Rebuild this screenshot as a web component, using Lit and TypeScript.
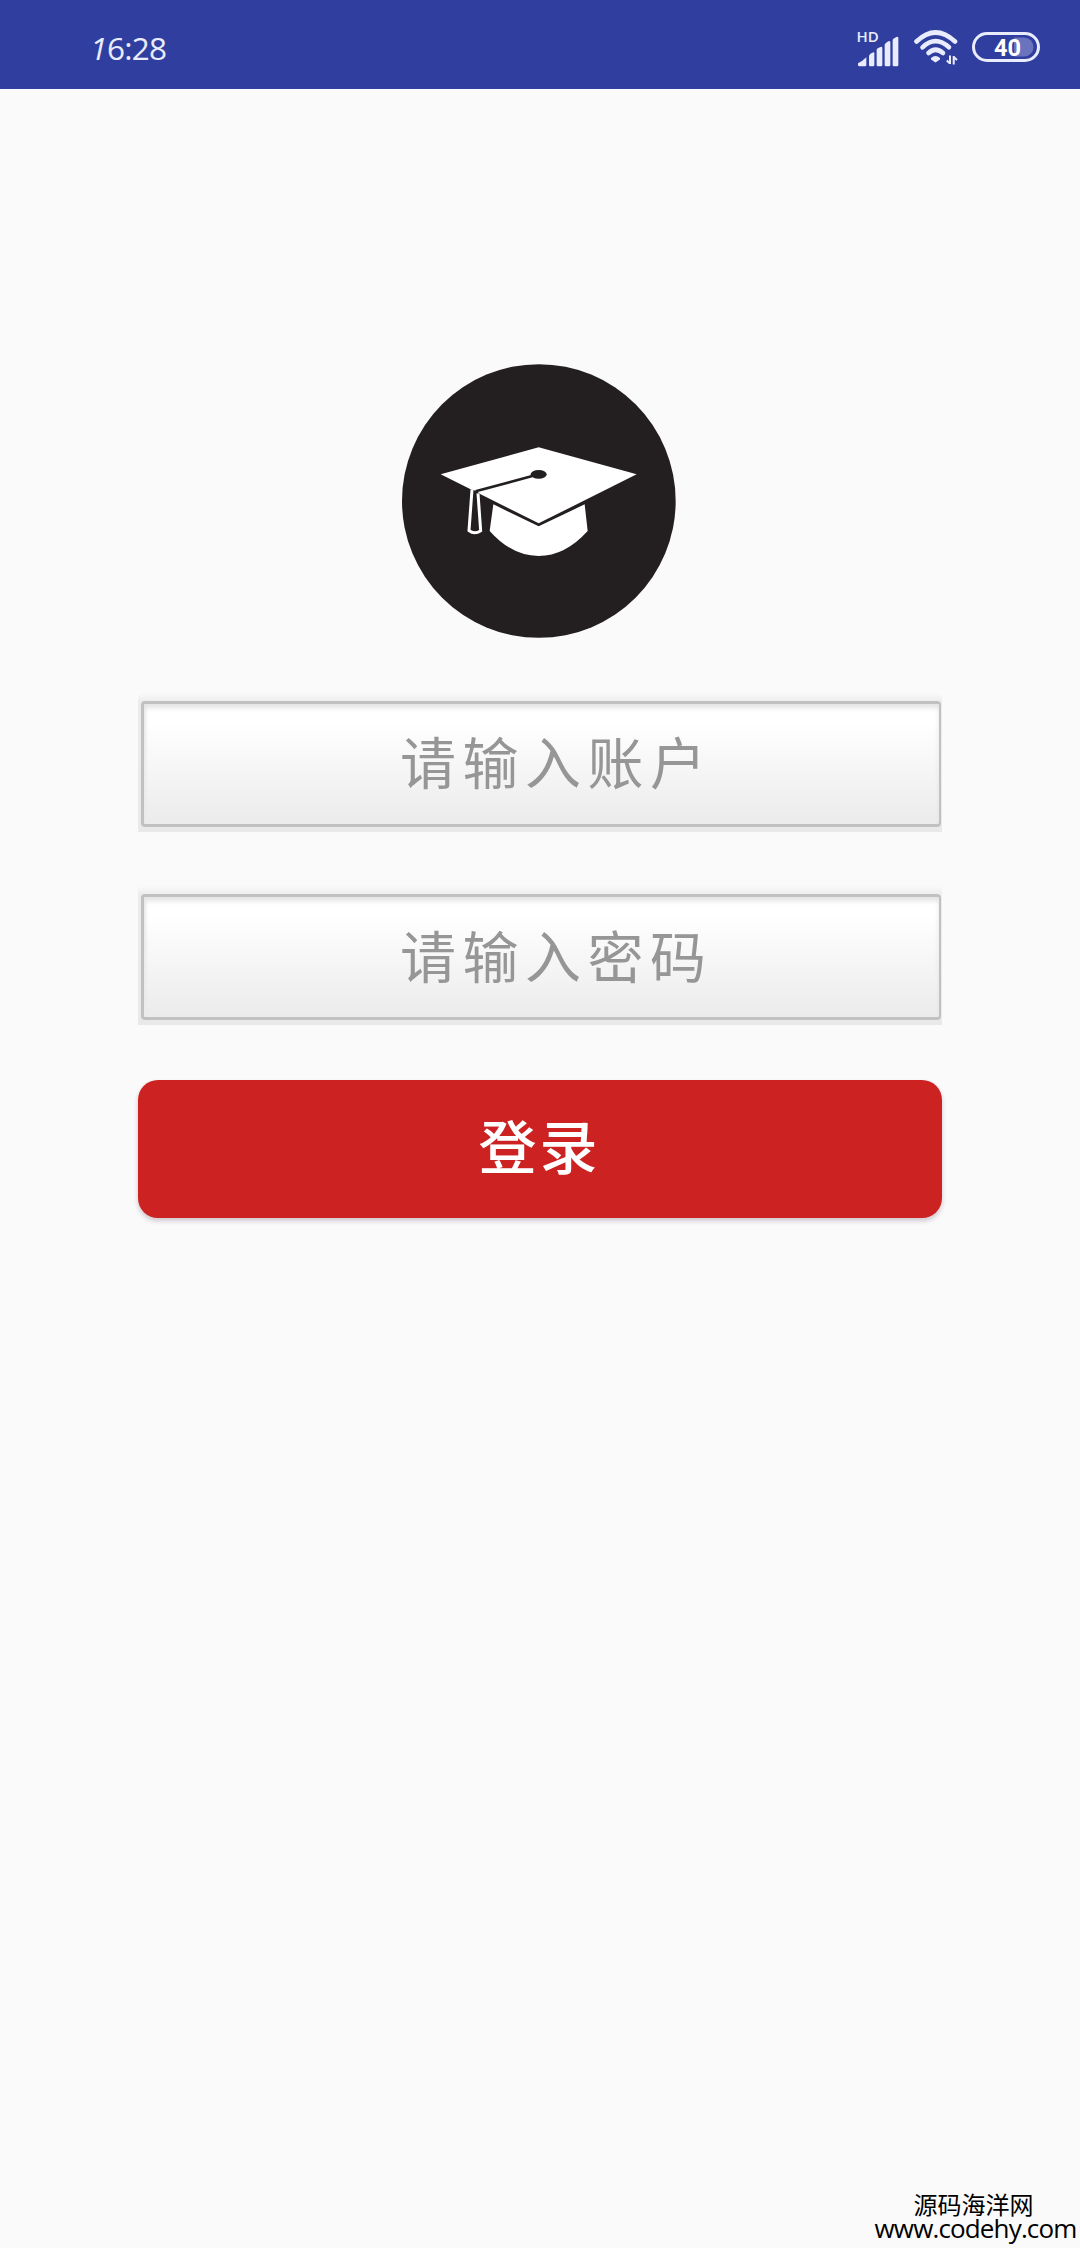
import { LitElement, html, css, svg } from "lit";
import { customElement, property } from "lit/decorators.js";

@customElement("status-bar")
class StatusBar extends LitElement {
  @property() level = "40";

  static styles = css`
    :host {
      display: flex;
      justify-content: space-between;
      box-sizing: border-box;
      height: 89px;
      padding: 24px 39px 0 93px;
      background: #303f9f;
      color: #e9ecfc;
    }
    .clock {
      display: flex;
      height: 48px;
      font: 400 31.5px/48px "Open Sans", "Noto Sans", sans-serif;
    }
    .lead {
      width: 15px;
      margin-left: -3px;
      margin-right: 2px;
      font-style: italic;
    }
    .rest {
      letter-spacing: -0.8px;
    }
    .icons {
      display: block;
      width: 190px;
      height: 48px;
    }
    .hd {
      font: 600 15px "Open Sans", sans-serif;
    }
    .level {
      font: 700 24px "Roboto", "Liberation Sans", sans-serif;
    }
  `;

  render() {
    const bars = [
      "M0 163 L0 158 Q12 153 25 140 V163 Q25 167 21 167 H4 Q0 167 0 163Z",
      "M33 136 Q33 132 46 125 Q49 125 49 128 V163 Q49 167 45 167 H37 Q33 167 33 163Z",
      "M56 117 Q56 113 70 108 Q73 108 73 111 V163 Q73 167 69 167 H60 Q56 167 56 163Z",
      "M80 103 Q80 98 93 91 Q97 91 97 94 V163 Q97 167 93 167 H84 Q80 167 80 163Z",
      "M104 88 Q104 84 117 78 Q121 78 121 81 V163 Q121 167 117 167 H108 Q104 167 104 163Z",
    ];
    return html`
      <div class="clock"><span class="lead">1</span><span class="rest">6:28</span></div>
      <svg class="icons" viewBox="0 0 190 48">
        <text class="hd" x="5.500" y="17.600" fill="#e9ecfc">HD</text>
        <g transform="translate(7 -18) scale(.3333)">
          <g transform="translate(0 14)" fill="#e9ecfc">
            ${bars.map((d) => svg`<path d=${d}></path>`)}
          </g>
        </g>
        <g fill="none" stroke="#e9ecfc" stroke-width="4.600" stroke-linecap="round">
          <path d="M65.500 17.500 Q84.500 -0.500 104 17.500"></path>
          <path d="M71.500 23.300 Q84.500 11 98 23.300"></path>
          <path d="M77.500 29 Q84.500 22.500 92 29"></path>
        </g>
        <path d="M80 34 Q84.500 30 89 34 V35.500 L84.500 38.500 L80 35.500Z" fill="#e9ecfc"></path>
        <path
          d="M99 31.500 V40 M99 39.500 L95.800 36.500 M102.700 40.500 V32 M102.700 33 L106 36"
          fill="none" stroke="#e9ecfc" stroke-width="2"></path>
        <path d="M163 13.500 H173 A9.500 9.500 0 0 1 173 32.500 H163Z" fill="#6a73be"></path>
        <rect x="122.500" y="9.500" width="65" height="27" rx="13.500" fill="none" stroke="#e9ecfc" stroke-width="3"></rect>
        <text class="level" x="143" y="31.500" fill="#fff" textLength="27" lengthAdjust="spacingAndGlyphs">${this.level}</text>
      </svg>
    `;
  }
}

@customElement("cap-logo")
class CapLogo extends LitElement {
  static styles = css`
    :host {
      display: block;
      width: 274px;
      height: 274px;
    }
    .logo {
      display: block;
      width: 100%;
      height: 100%;
    }
  `;

  render() {
    return html`
      <svg class="logo" viewBox="37 41 822 822">
        <circle cx="447.500" cy="452" r="410.500" fill="#231f20"></circle>
        <path
          d="M311 462 L447 528 L585 462 L594 542 Q526 617 447 617 Q367 617 300 542Z"
          fill="#fff"></path>
        <path d="M153 372 L447 291 L741 372 L447 519Z" fill="#fff"></path>
        <path d="M428 377 L258 423" stroke="#231f20" stroke-width="8"></path>
        <ellipse cx="447" cy="372" rx="24" ry="13" fill="#231f20"></ellipse>
        <path d="M248 418 L262 423 L272 432 L262 438 L248 430Z" fill="#231f20"></path>
        <path
          d="M247 418 L238 541 Q255 554 273 541 L265 429"
          fill="none" stroke="#fff" stroke-width="9"></path>
      </svg>
    `;
  }
}

@customElement("app-root")
class AppRoot extends LitElement {
  static styles = css`
    :host {
      display: flex;
      flex-direction: column;
      height: 2248px;
      background: #fafafa;
    }
    .login {
      display: flex;
      flex-direction: column;
      align-items: center;
      width: 804px;
      margin: 275px auto 0 138px;
    }
    .mark {
      margin-right: 2px;
    }
    .field {
      box-sizing: border-box;
      width: 804px;
      height: 139px;
      margin-top: 54px;
      padding: 8px 1px 5px 3px;
      background: linear-gradient(#fafafa, #ececec 9px, #e9e9e9);
    }
    .first {
      margin-top: 55px;
    }
    .input {
      display: block;
      box-sizing: border-box;
      width: 100%;
      height: 126px;
      margin: 0;
      padding: 0 0 7px 256px;
      border: 3px solid #c1c1c1;
      border-right-width: 2px;
      border-radius: 4px;
      outline: none;
      background: linear-gradient(#fff 15%, #ebebeb);
      box-shadow: inset 0 4px 5px #e4e4e4, inset 2px 0 3px #eee;
      font: 400 56px/80px "Noto Sans CJK SC", sans-serif;
      letter-spacing: 6.5px;
    }
    .first .input {
      padding-bottom: 10px;
    }
    .input::placeholder {
      color: #969696;
      opacity: 1;
    }
    .submit {
      width: 804px;
      height: 138px;
      margin-top: 55px;
      padding: 0 2px 10px 1px;
      border: 0;
      border-radius: 20px;
      background: #cc2222;
      box-shadow: 0 3px 5px rgba(60, 20, 50, 0.22);
      color: #fff;
      font: 500 58px/80px "Noto Sans CJK SC", sans-serif;
      letter-spacing: 3px;
    }
    .credit {
      display: flex;
      flex-direction: column;
      align-items: center;
      width: 201px;
      margin: auto 4px 7px auto;
      color: #000;
    }
    .site {
      margin-right: 4px;
      font: 400 24px/22px "Noto Sans CJK SC", sans-serif;
    }
    .url {
      font: 400 26px/26px "Open Sans", "Noto Sans", sans-serif;
      letter-spacing: -0.85px;
    }
  `;

  render() {
    return html`
      <status-bar></status-bar>
      <main class="login">
        <cap-logo class="mark"></cap-logo>
        <div class="field first"><input class="input" type="text" placeholder="请输入账户" /></div>
        <div class="field"><input class="input" type="text" placeholder="请输入密码" /></div>
        <button class="submit">登录</button>
      </main>
      <footer class="credit">
        <span class="site">源码海洋网</span>
        <span class="url">www.codehy.com</span>
      </footer>
    `;
  }
}
